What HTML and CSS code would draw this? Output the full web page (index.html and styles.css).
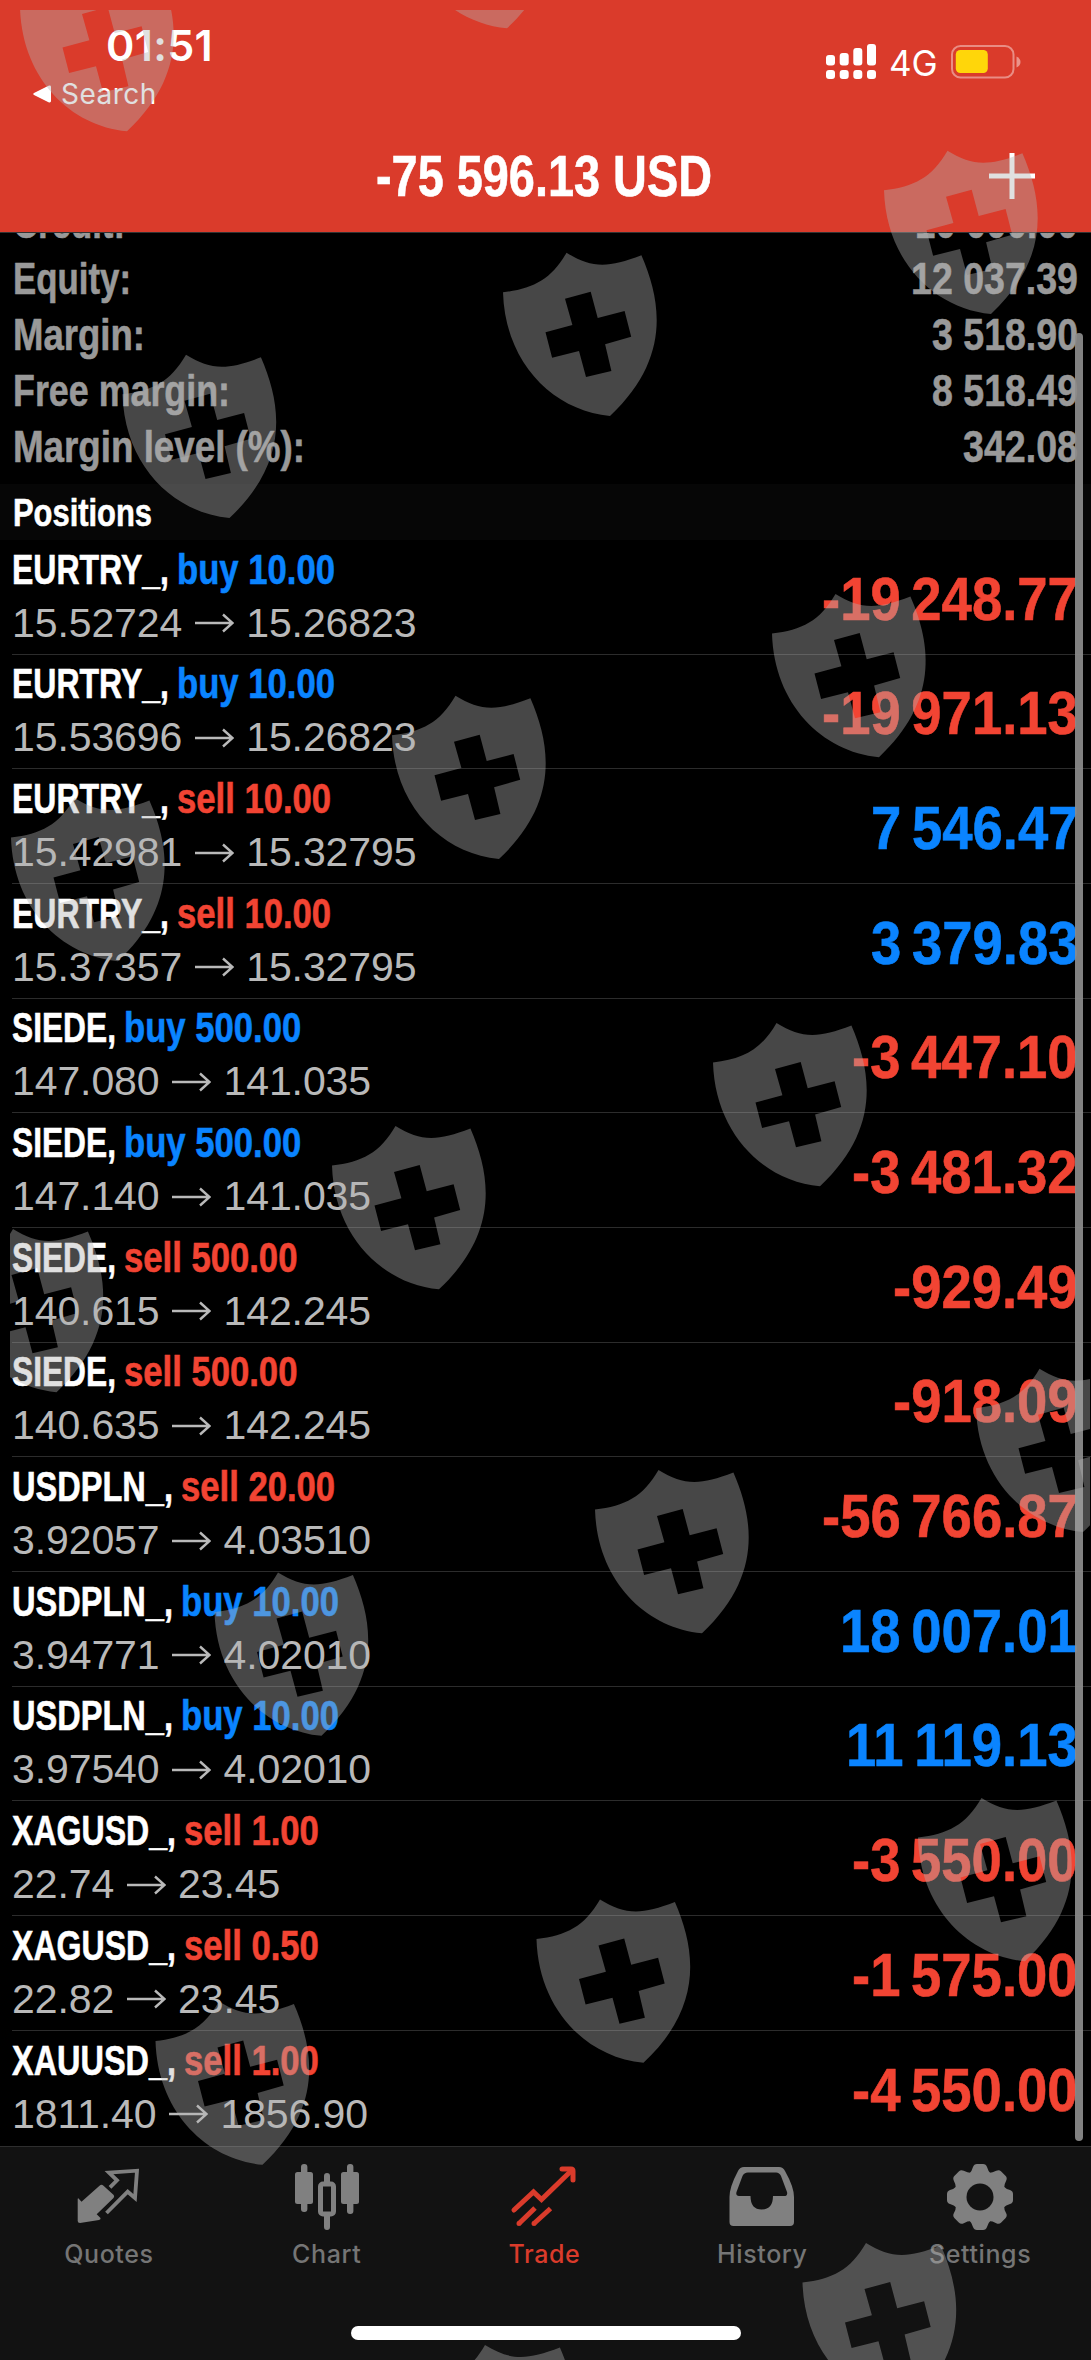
FILE: index.html
```html
<!DOCTYPE html>
<html lang="en">
<head>
  <meta charset="UTF-8" />
  <meta name="viewport" content="width=device-width, initial-scale=1.0" />
  <title>Trade</title>
  <link rel="stylesheet" href="styles.css">
</head>

<body>
<div class="screen">

  <header class="header">
    <div class="status">
      <div class="status-left">
        <div class="time">01:51</div>
        <div class="back">
          <svg width="18" height="18" viewBox="0 0 18 18"><path d="M1 8 L15.500 .700 Q18 0 18 2 V16 Q18 18 15.500 17.300 L1 10 Q-.5 9 1 8Z" fill="#fff"/></svg>
          <span class="back-text">Search</span>
        </div>
      </div>
      <div class="status-right">
        <svg class="signal" width="51" height="36" viewBox="0 0 51 36" fill="#fff">
          <rect x="0" y="11" width="9" height="10.500" rx="3"/>
          <rect x="13.700" y="9" width="9" height="12.500" rx="3"/>
          <rect x="27.300" y="4" width="9" height="17.500" rx="3"/>
          <rect x="41" y="0" width="9" height="21.500" rx="3"/>
          <rect x="0" y="26" width="9" height="9" rx="3"/>
          <rect x="13.700" y="26" width="9" height="9" rx="3"/>
          <rect x="27.300" y="26" width="9" height="9" rx="3"/>
          <rect x="41" y="26" width="9" height="9" rx="3"/>
        </svg>
        <span class="network">4G</span>
        <svg class="battery" width="70" height="34" viewBox="0 0 70 34">
          <rect x="1" y="1" width="61.500" height="31.500" rx="8.500" fill="none" stroke="#fff" stroke-opacity=".42" stroke-width="2"/>
          <rect x="4.800" y="5" width="32" height="23" rx="4.500" fill="#ffd60a"/>
          <path d="M65.500 11.500 Q69.500 13.500 69.500 17 T65.500 22.500Z" fill="#fff" fill-opacity=".45"/>
        </svg>
      </div>
    </div>
    <div class="title-bar">
      <h1 class="title"><span class="fit" data-w="336">-75 596.13 USD</span></h1>
      <svg class="plus" width="46" height="46" viewBox="0 0 46 46"><path d="M23 0V46M0 23H46" stroke="#fff" stroke-width="5"/></svg>
    </div>
  </header>

  <main class="content">
    <dl class="summary" id="summary"></dl>
    <h2 class="section"><span class="fit" data-w="139">Positions</span></h2>
    <ul class="positions" id="positions"></ul>
    <div class="scrollbar"></div>
  </main>

  <nav class="tabs">
    <a class="tab">
      <svg width="66" height="66" viewBox="0 0 66 66">
        <path d="M1.700 38 Q2 36.500 3 38 L5.500 40.700 L23.500 24.700 Q25.500 23 27.500 24.700 L37.700 34 Q38.700 35.700 37.500 37 L20.700 53.300 L24.500 57 Q25 58.500 23 59 L4 62 Q1.700 62 1.700 60Z" fill="#808080"/>
        <path d="M34 26.300 L41 19.300 L33 11.700 L61 9.700 L59 37 L51.700 30.700 L30.500 52" fill="none" stroke="#808080" stroke-width="3.800"/>
      </svg>
      <span>Quotes</span>
    </a>
    <a class="tab">
      <svg width="66" height="66" viewBox="0 -1 66 66" fill="#808080">
        <rect x="1" y="10" width="18" height="32" rx="2.500"/>
        <rect x="7" y="2" width="6.400" height="48" rx="3"/>
        <rect x="47" y="10" width="18" height="32" rx="2.500"/>
        <rect x="53" y="2" width="6.400" height="50" rx="3"/>
        <rect x="26.500" y="22" width="13" height="30" rx="2.500" fill="none" stroke="#808080" stroke-width="5"/>
        <path d="M30 21 V14 Q30 11 33 11 T36 14 V21ZM30 53 V65 Q30 68 33 68 T36 65 V53Z"/>
      </svg>
      <span>Chart</span>
    </a>
    <a class="tab active">
      <svg width="66" height="66" viewBox="0 0 66 66" fill="none" stroke="#da3b2b" stroke-width="5">
        <path d="M3 49 L22.500 31 L30.500 38.500 L61 9" stroke-linecap="round"/>
        <path d="M51 8 H60 Q62 8 62 10 V19" stroke-linecap="round"/>
        <path d="M8 62.500 L24 47 M23 62.500 L39.500 47.500"/>
        <path d="M8 62.500h.01 M23 62.500h.01" stroke-linecap="round"/>
      </svg>
      <span>Trade</span>
    </a>
    <a class="tab">
      <svg width="66" height="66" viewBox="0 -2 66 66">
        <path fill="#808080" fill-rule="evenodd" d="M15 4 H50 Q54 4 56 8 Q65 24 65 34 V59 Q65 63 61 63 H4.500 Q.5 63 .5 59 V34 Q.5 24 9 8 Q11 4 15 4Z M19 9.500 Q15 9.500 13.500 13 L7.500 29 Q6.500 33 10 33 H21.500 Q21.500 46.500 32.700 46.500 T44 33 H55 Q59 33 58 29 L52 13 Q50.500 9.500 47 9.500Z"/>
      </svg>
      <span>History</span>
    </a>
    <a class="tab">
      <svg width="66" height="66" viewBox="-33 -36 66 66">
        <g id="gear" fill="#808080"></g>
        <circle r="13.500" fill="#121212"/>
      </svg>
      <span>Settings</span>
    </a>
    <div class="home"></div>
  </nav>

  <div class="marks">
    <svg width="1080" height="2350" viewBox="10 10 1080 2350">
      <defs>
        <path id="shield" fill-rule="evenodd" d="M0 39.600 C30 36 48 27 63.500 0 C88 15 104 16 138.400 2.600 C160 52 166 108 107 163.300 C50 158 2 110 0 39.600Z M62 46 L69.400 72.300 L42.500 79.600 L49.100 105 L76 98.300 L83 124.300 L108.400 118.300 L102.100 91.600 L128.200 84 L121.600 58.300 L94.700 65.300 L87.700 39Z"/>
      </defs>
      <g id="shields" fill="#b2b2b2" fill-opacity=".4"></g>
    </svg>
  </div>
</div>

<script src="script.js"></script>
</body>
</html>
```
FILE: styles.css
```css
* {
  margin: 0;
  padding: 0;
  box-sizing: border-box;
}

body {
  background: #000;
  font-family: "Liberation Sans", Arial, sans-serif;
  overflow: hidden;
}

.screen {
  position: relative;
  display: flex;
  flex-direction: column;
  width: 1091px;
  height: 2360px;
  overflow: hidden;
}

/* condensed lettering, width is set in script.js */
.fit {
  display: inline-block;
  white-space: pre;
  transform-origin: left center;
  -webkit-text-stroke: .6px currentColor;
}

/* header */
.header {
  height: 233px;
  flex: none;
  background: #da3b2b;
  border-bottom: 1px solid #333;
  color: #fff;
}

.status {
  display: flex;
  justify-content: space-between;
  height: 130px;
  padding: 19px 70px 0 33px;
  font-family: Inter, sans-serif;
}

.time {
  padding-left: 73px;
  font-size: 43px;
  line-height: 52px;
  font-weight: 600;
  letter-spacing: .3px;
}

.back {
  display: flex;
  align-items: center;
  gap: 10px;
  height: 46px;
  font-size: 28px;
  letter-spacing: .5px;
}

.status-right {
  display: flex;
  align-items: flex-start;
  padding-top: 25px;
}

.network {
  width: 48px;
  margin: -1px 14px 0 12px;
  font-size: 35px;
  line-height: 40px;
}

.battery {
  margin-top: 1px;
}

.title-bar {
  display: flex;
  align-items: center;
  justify-content: space-between;
  padding: 13px 56px 0 376px;
}

.title {
  font-size: 57px;
  line-height: 66px;
  font-weight: bold;
}

.plus {
  display: block;
}

/* account summary */
.content {
  position: relative;
  height: 1913px;
  flex: none;
  overflow: hidden;
}

.summary {
  margin-top: -38px;
  height: 289px;
  padding: 0 13px 0 12.500px;
  color: #999;
  font-size: 44.500px;
  font-weight: bold;
}

.summary-row {
  display: flex;
  justify-content: space-between;
  height: 56px;
  line-height: 56px;
}

.section {
  height: 56px;
  padding-left: 12.500px;
  background: #060606;
  color: #fff;
  font-size: 39px;
  line-height: 57px;
}

/* positions */
.positions {
  list-style: none;
}

.position {
  display: flex;
  align-items: center;
  justify-content: space-between;
  height: 114.670px;
  margin-left: 12px;
  padding-right: 13px;
  border-bottom: 1px solid #2c2c2c;
}

.position:last-child {
  border-bottom: 0;
}

.name {
  display: flex;
  gap: 8px;
  margin-top: -1px;
  color: #fff;
  font-size: 42px;
  line-height: 53px;
  font-weight: bold;
}

.prices {
  display: flex;
  align-items: center;
  gap: 12.500px;
  padding-top: 1px;
  color: #b9b9b9;
  font-size: 41px;
  line-height: 53px;
  letter-spacing: -.1px;
}

.buy,
.plus-money {
  color: #0a84ff;
}

.sell,
.minus-money {
  color: #f24433;
}

.profit {
  padding-top: 4px;
  font-size: 60.500px;
  line-height: 70px;
  font-weight: bold;
  word-spacing: -5px;
}

.scrollbar {
  position: absolute;
  top: 100px;
  right: 8px;
  width: 8px;
  height: 1808px;
  border-radius: 4px;
  background: rgba(140, 140, 140, .92);
}

/* bottom tabs */
.tabs {
  position: relative;
  display: flex;
  flex: 1;
  padding: 14px 2px 0 0;
  background: #121212;
  border-top: 1px solid #2e2e2e;
}

.tab {
  display: flex;
  flex: 1;
  flex-direction: column;
  align-items: center;
  color: #757575;
  font-family: Inter, sans-serif;
  font-size: 25px;
  line-height: 32px;
  font-weight: 500;
  letter-spacing: .6px;
}

.tab svg {
  overflow: visible;
}

.tab span {
  margin-top: 11px;
}

.tab.active {
  color: #da3b2b;
}

.home {
  position: absolute;
  left: 351px;
  bottom: 20px;
  width: 390px;
  height: 14px;
  border-radius: 7px;
  background: #fff;
}

/* shields lie over the whole screen */
.marks {
  position: absolute;
  top: 10px;
  left: 10px;
  pointer-events: none;
}
```
FILE: script.js
```js
const summary = [
  ['Credit:', 112, '10 000.00', 163],
  ['Equity:', 118, '12 037.39', 167],
  ['Margin:', 132, '3 518.90', 146],
  ['Free margin:', 217, '8 518.49', 146],
  ['Margin level (%):', 292, '342.08', 115]
];

// symbol, side, volume, open, current, profit
const positions = [
  ['EURTRY_', 'buy', '10.00', '15.52724', '15.26823', '-19 248.77'],
  ['EURTRY_', 'buy', '10.00', '15.53696', '15.26823', '-19 971.13'],
  ['EURTRY_', 'sell', '10.00', '15.42981', '15.32795', '7 546.47'],
  ['EURTRY_', 'sell', '10.00', '15.37357', '15.32795', '3 379.83'],
  ['SIEDE', 'buy', '500.00', '147.080', '141.035', '-3 447.10'],
  ['SIEDE', 'buy', '500.00', '147.140', '141.035', '-3 481.32'],
  ['SIEDE', 'sell', '500.00', '140.615', '142.245', '-929.49'],
  ['SIEDE', 'sell', '500.00', '140.635', '142.245', '-918.09'],
  ['USDPLN_', 'sell', '20.00', '3.92057', '4.03510', '-56 766.87'],
  ['USDPLN_', 'buy', '10.00', '3.94771', '4.02010', '18 007.01'],
  ['USDPLN_', 'buy', '10.00', '3.97540', '4.02010', '11 119.13'],
  ['XAGUSD_', 'sell', '1.00', '22.74', '23.45', '-3 550.00'],
  ['XAGUSD_', 'sell', '0.50', '22.82', '23.45', '-1 575.00'],
  ['XAUUSD_', 'sell', '1.00', '1811.40', '1856.90', '-4 550.00']
];

const symbolWidth = { EURTRY_: 157, SIEDE: 104, USDPLN_: 161, XAGUSD_: 164, XAUUSD_: 164 };

const arrow = '<svg width="39" height="20" viewBox="0 0 39 20"><path d="M0 10H37M28 1.500L37.500 10L28 18.500" fill="none" stroke="#b9b9b9" stroke-width="2.400"/></svg>';

document.getElementById('summary').innerHTML = summary.map(([label, lw, value, vw]) =>
  `<div class="summary-row"><dt><span class="fit" data-w="${lw}">${label}</span></dt>
   <dd><span class="fit" data-w="${vw}">${value}</span></dd></div>`).join('');

document.getElementById('positions').innerHTML = positions.map(([symbol, side, volume, open, now, profit]) =>
  `<li class="position">
    <div>
      <div class="name"><span><span class="fit" data-w="${symbolWidth[symbol]}">${symbol},</span></span><span class="${side}"><span class="fit" data-scale=".825">${side} ${volume}</span></span></div>
      <div class="prices"><span>${open}</span>${arrow}<span>${now}</span></div>
    </div>
    <div class="profit ${profit[0] === '-' ? 'minus-money' : 'plus-money'}"><span class="fit" data-scale=".9">${profit}</span></div>
  </li>`).join('');

// squeeze each text to its condensed width
document.querySelectorAll('.fit').forEach(el => {
  const natural = el.getBoundingClientRect().width;
  const scale = el.dataset.scale ? +el.dataset.scale : el.dataset.w / natural;
  el.style.transform = `scaleX(${scale})`;
  el.style.marginRight = `${natural * (scale - 1)}px`;
});

const shields = [
  [20, -32], [400, -135], [884, 150.7], [503, 252.7], [122.5, 354.7],
  [772, 594], [392, 695.7], [11, 798], [713, 1023], [332, 1126],
  [-50.5, 1229], [976, 1368.7], [595, 1470], [214.5, 1572.5], [918, 1798],
  [536.5, 1899.5], [155.5, 2001.5], [802.5, 2243], [421.5, 2345]
];

document.getElementById('shields').innerHTML = shields.map(([x, y]) =>
  `<use href="#shield" x="${x}" y="${y}"/>`).join('');

// eight gear teeth
let gear = '<circle r="26"/>';
for (let a = 0; a < 360; a += 45) {
  gear += `<path transform="rotate(${a})" d="M-11 -23 Q-8 -26 -7 -30 Q-6 -33 -3 -33 H3 Q6 -33 7 -30 Q8 -26 11 -23Z"/>`;
}
document.getElementById('gear').innerHTML = gear;
```
